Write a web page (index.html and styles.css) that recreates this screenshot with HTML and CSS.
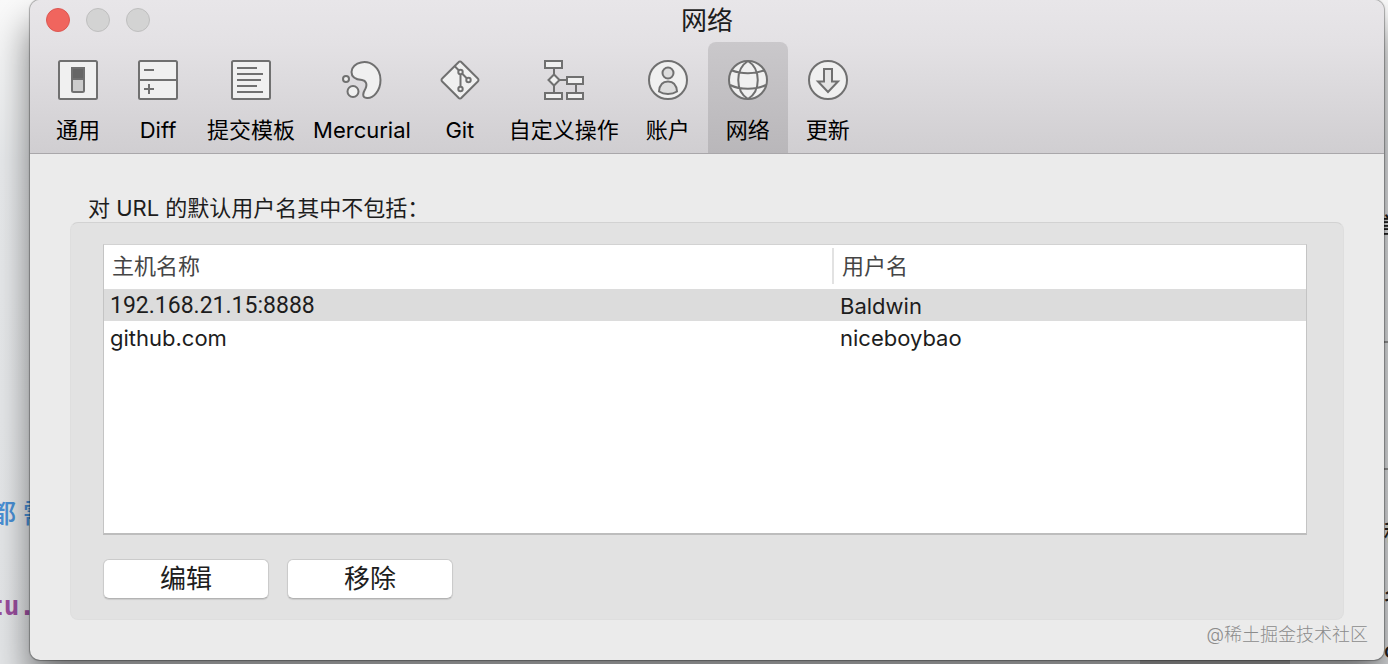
FILE: index.html
```html
<!DOCTYPE html>
<html lang="zh-CN">
<head>
<meta charset="utf-8">
<title>网络</title>
<link rel="stylesheet" href="styles.css">
</head>
<body>
<div class="backdrop" aria-hidden="true">
  <span class="scrap scrap-blue">都 需</span>
  <span class="scrap scrap-purple">tu.</span>
  <span class="scrap scrap-dark scrap-first">言</span>
  <span class="scrap scrap-dark scrap-second">种</span>
  <span class="scrap scrap-dark scrap-third">名</span>
  <span class="scrap scrap-dark scrap-fourth">o</span>
  <span class="rule rule-upper"></span>
  <span class="rule rule-lower"></span>
  <span class="dock"></span>
</div>
<main class="window">
  <header class="chrome">
    <div class="titlebar">
      <div class="lights">
        <button class="light light-close" type="button" aria-label="关闭"></button>
        <button class="light" type="button" aria-label="最小化" disabled></button>
        <button class="light" type="button" aria-label="缩放" disabled></button>
      </div>
      <h1 class="title">网络</h1>
    </div>
    <nav class="toolbar">
      <button class="tab" type="button">
        <svg class="icon" viewBox="0 0 40 40"><rect x="1" y="1" width="38" height="38" rx="1.5"/><rect x="14" y="8" width="12" height="24" rx="1.5" fill="#ccc"/><path class="solid" d="M14 8h12v11H14z"/></svg>
        <span>通用</span>
      </button>
      <button class="tab" type="button">
        <svg class="icon" viewBox="0 0 40 40"><rect x="1" y="1" width="38" height="38" rx="1.5"/><path d="M1 20h38M6 10h10M6 29h10M11 24v10"/></svg>
        <span>Diff</span>
      </button>
      <button class="tab" type="button">
        <svg class="icon" viewBox="0 0 40 40"><rect x="1" y="1" width="38" height="38" rx="1.5"/><path d="M6 8h20M6 14h26M6 20h24M6 26h20M6 32h26"/></svg>
        <span>提交模板</span>
      </button>
      <button class="tab" type="button">
        <svg class="icon" viewBox="0 0 40 40"><path d="M19 2.500c9.500-2 19.500 5 19.500 17.500C38.500 31 31 38.500 25 38c-6-.5-3.500-6-1.500-9.500 2-4 .5-8-3.500-8.500C13 19.500 9.500 16.500 9.500 12c0-5 4.500-8.500 9.500-9.500z"/><circle cx="4" cy="19" r="3"/><circle cx="11" cy="31.500" r="5.500"/></svg>
        <span>Mercurial</span>
      </button>
      <button class="tab" type="button">
        <svg class="icon" viewBox="0 0 40 40"><path d="M18.500 2.200a2 2 0 0 1 3 0l16.300 16.300a2 2 0 0 1 0 3L21.500 37.800a2 2 0 0 1-3 0L2.200 21.500a2 2 0 0 1 0-3z"/><path d="M14.500 6l4.500 4.500M22 13.500l5 5M20.500 14.500V27"/><circle cx="20.500" cy="12" r="2.200"/><circle cx="28.500" cy="20" r="2.200"/><circle cx="20.500" cy="29" r="2.200"/></svg>
        <span>Git</span>
      </button>
      <button class="tab" type="button">
        <svg class="icon" viewBox="0 0 40 40"><path d="M10 8v7M10 25v8M15 20h8M32 24v9"/><rect x="1" y="1" width="17" height="7"/><path d="M10 14.500l5.500 5.500-5.500 5.500L4.500 20z"/><rect x="23" y="17" width="16" height="7"/><rect x="1" y="33" width="17" height="6"/><rect x="23" y="33" width="16" height="6"/></svg>
        <span>自定义操作</span>
      </button>
      <button class="tab" type="button">
        <svg class="icon" viewBox="0 0 40 40"><circle cx="20" cy="20" r="19"/><circle cx="20" cy="13" r="5.500" fill="#ddd"/><path fill="#ddd" d="M11 31.500C11.500 25 15 21.500 20 21.500s8.500 3.500 9 10c-5 3.200-13 3.200-18 0z"/></svg>
        <span>账户</span>
      </button>
      <button class="tab tab-selected" type="button" aria-current="page">
        <svg class="icon" viewBox="0 0 40 40"><circle cx="20" cy="20" r="19"/><path fill="none" d="M20 1C7 9 7 31 20 39M20 1c13 8 13 30 0 38M4 10.500c9 3.500 23 3.500 32 0M2 25c10 5 26 5 36 0"/></svg>
        <span>网络</span>
      </button>
      <button class="tab" type="button">
        <svg class="icon" viewBox="0 0 40 40"><circle cx="20" cy="20" r="19"/><path fill="#e4e4e4" d="M16 9h8v12.500h6L20 32 10 21.500h6z"/></svg>
        <span>更新</span>
      </button>
    </nav>
  </header>
  <section class="content">
    <h2 class="caption" id="hosts-caption">对 URL 的默认用户名其中不包括：</h2>
    <div class="group">
      <div class="list">
        <table class="hosts" aria-labelledby="hosts-caption">
          <thead>
            <tr><th scope="col">主机名称</th><th class="user" scope="col"><span class="divided">用户名</span></th></tr>
          </thead>
          <tbody>
            <tr class="selected"><td class="address">192.168.21.15:8888</td><td>Baldwin</td></tr>
            <tr><td>github.com</td><td>niceboybao</td></tr>
          </tbody>
        </table>
      </div>
      <div class="actions">
        <button class="action" type="button">编辑</button>
        <button class="action" type="button">移除</button>
      </div>
    </div>
  </section>
  <p class="watermark">@稀土掘金技术社区</p>
</main>
</body>
</html>
```
FILE: styles.css
```css
* {
  box-sizing: border-box;
}

body {
  position: relative;
  display: flex;
  min-height: 100vh;
  margin: 0;
  padding: 0 4px 4px 30px;
  overflow: hidden;
  background: linear-gradient(#fafafa, #e8eaec 160px, #e4e6e8);
  color: #1d1d1d;
  font-family: Inter, "Noto Sans CJK SC", sans-serif;
  font-size: 22px;
  line-height: 28px;
}

button {
  border: 0;
  padding: 0;
  background: none;
  color: inherit;
  font: inherit;
}

.backdrop {
  position: absolute;
  inset: 0;
  overflow: hidden;
}

.scrap {
  position: absolute;
  white-space: nowrap;
}

.scrap-blue {
  top: 500px;
  left: -10px;
  color: #4a90d6;
  font-size: 26px;
  font-weight: 500;
}

.scrap-purple {
  top: 592px;
  left: -12px;
  color: #9b4f9f;
  font-family: "DejaVu Sans Mono", monospace;
  font-size: 26px;
  font-weight: 700;
}

.scrap-dark {
  right: -18px;
  width: 22px;
  color: #222;
  font-weight: 500;
}

.scrap-first { top: 211px; right: -10px; }
.scrap-second { top: 518px; }
.scrap-third { top: 583px; }
.scrap-fourth { top: 636px; }

.rule {
  position: absolute;
  right: 0;
  width: 4px;
  height: 2px;
  background: #999;
}

.rule-upper { top: 341px; }
.rule-lower { top: 468px; }

.dock {
  position: absolute;
  right: 98px;
  bottom: 0;
  width: 150px;
  height: 4px;
  background: #bbb;
}

.window {
  position: relative;
  display: flex;
  flex: 1;
  flex-direction: column;
  border-radius: 10px;
  background: #ebebeb;
  box-shadow: 0 0 1px 1px rgba(0, 0, 0, 0.3), 0 24px 36px rgba(0, 0, 0, 0.5);
}

.chrome {
  border-bottom: 1px solid #a9a7aa;
  border-radius: 10px 10px 0 0;
  background: linear-gradient(#e8e6e9, #e3e1e4 45px, #d0ced1);
}

.titlebar {
  display: grid;
  grid-template-columns: 1fr auto 1fr;
  align-items: center;
  height: 42px;
  padding: 0 16px 2px;
}

.lights {
  display: flex;
  gap: 16px;
}

.light {
  width: 24px;
  height: 24px;
  border: 1px solid #bfbfbf;
  border-radius: 50%;
  background: #d3d3d3;
}

.light-close {
  border-color: #dc5752;
  background: #f0655e;
}

.title {
  margin: 0;
  padding-top: 2px;
  font-size: 26px;
  font-weight: 400;
}

.toolbar {
  display: flex;
  padding: 0 8px;
  color: #000;
}

.tab {
  display: flex;
  flex-direction: column;
  align-items: center;
  gap: 16px;
  min-width: 80px;
  padding: 18px 9px 9px;
  border-radius: 8px 8px 0 0;
}

.tab-selected {
  background: linear-gradient(#cac8cb, #b9b7ba);
}

.icon {
  width: 40px;
  height: 40px;
  fill: #f0f0f0;
  stroke: #707070;
  stroke-width: 2;
}

.icon .solid {
  fill: #666;
}

.content {
  display: flex;
  flex: 1;
  flex-direction: column;
  padding: 40px;
}

.caption {
  margin: 0 18px;
  font-size: 22px;
  font-weight: 400;
}

.group {
  display: flex;
  flex: 1;
  flex-direction: column;
  gap: 24px;
  padding: 21px 36px 20px 32px;
  border: 1px solid #dedede;
  border-top-color: #d2d2d2;
  border-radius: 8px;
  background: #e2e2e2;
}

.list {
  flex: 1;
  border: 1px solid #c4c4c4;
  border-top-color: #d2d2d2;
  border-bottom: 2px solid #bdbdbd;
  background: #fff;
}

.hosts {
  width: 100%;
  border-collapse: collapse;
  table-layout: fixed;
}

.hosts th {
  height: 44px;
  padding: 0 8px 2px;
  color: #454545;
  font-weight: 400;
  text-align: left;
}

.hosts .user {
  width: 474px;
  padding: 0 0 2px;
}

.divided {
  display: block;
  padding: 4px 8px;
  border-left: 2px solid #e2e2e2;
}

.hosts td {
  height: 32px;
  padding: 2px 6px 0;
}

.hosts td:last-child {
  padding-left: 8px;
}

.hosts .address {
  font-family: Roboto, sans-serif;
  font-size: 23px;
}

.hosts .selected {
  background: #dcdcdc;
}

.actions {
  display: flex;
  gap: 18px;
}

.action {
  width: 166px;
  height: 40px;
  border: 1px solid #cbcbcb;
  border-bottom-color: #b3b3b3;
  border-radius: 6px;
  background: #fff;
  box-shadow: 0 1px 1px rgba(0, 0, 0, 0.1);
  font-size: 26px;
}

.watermark {
  position: absolute;
  right: 16px;
  bottom: 11px;
  margin: 0;
  color: #8c8c8c;
  font-size: 18px;
  font-weight: 300;
}
```
